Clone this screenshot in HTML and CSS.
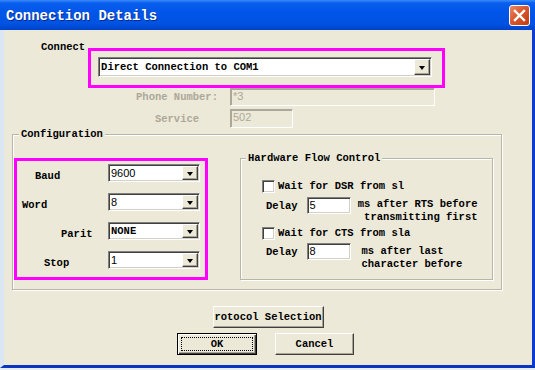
FILE: index.html
```html
<!DOCTYPE html>
<html lang="en">

<head>
    <meta charset="UTF-8">
    <title>Connection Details</title>
    <link rel="stylesheet" href="styles.css">
</head>

<body>

    <div class="window">
        <div class="titlebar">
            <span class="title">Connection Details</span>
            <span class="close">
                <svg width="13" height="13" viewBox="0 0 13 13">
                    <path d="M2 2 L11 11 M11 2 L2 11" stroke="#fff" stroke-width="2.4" stroke-linecap="square" fill="none" />
                </svg>
            </span>
        </div>

        <div class="client">
            <!-- connection type -->
            <div class="connect-row">
                <span class="connect-lbl">Connect</span>
                <div class="mark mark-connect">
                    <div class="combo combo-wide">
                        <span class="combo-text">Direct Connection to COM1</span>
                        <span class="drop"></span>
                    </div>
                </div>
            </div>

            <div class="dial-grid">
                <span class="lbl-off">Phone Number:</span>
                <div class="edit edit-off edit-phone">*3</div>
                <span class="lbl-off">Service</span>
                <div class="edit edit-off edit-service">502</div>
            </div>

            <fieldset class="group config">
                <legend>Configuration</legend>
                <div class="config-body">
                    <div class="mark mark-port">
                        <span class="port-lbl lbl-baud">Baud</span>
                        <div class="combo"><span class="combo-text val-sans">9600</span><span class="drop"></span></div>
                        <span class="port-lbl lbl-word">Word</span>
                        <div class="combo"><span class="combo-text val-sans">8</span><span class="drop"></span></div>
                        <span class="port-lbl lbl-parit">Parit</span>
                        <div class="combo"><span class="combo-text">NONE</span><span class="drop"></span></div>
                        <span class="port-lbl lbl-stop">Stop</span>
                        <div class="combo"><span class="combo-text val-sans">1</span><span class="drop"></span></div>
                    </div>

                    <fieldset class="group flow">
                        <legend>Hardware Flow Control</legend>
                        <div class="flow-body">
                            <div class="check-row"><span class="check"></span>Wait for DSR from sl</div>
                            <div class="delay-row">
                                <span class="delay-lbl">Delay</span>
                                <div class="edit edit-delay">5</div>
                                <span class="note note-rts">ms after RTS before<br>transmitting first</span>
                            </div>
                            <div class="check-row check-second"><span class="check"></span>Wait for CTS from sla</div>
                            <div class="delay-row delay-second">
                                <span class="delay-lbl">Delay</span>
                                <div class="edit edit-delay">8</div>
                                <span class="note note-last">ms after last<br>character before</span>
                            </div>
                        </div>
                    </fieldset>
                </div>
            </fieldset>

            <div class="buttons">
                <div class="btn btn-protocol">rotocol Selection</div>
                <div class="btn-row">
                    <div class="btn btn-default"><span class="focus">OK</span></div>
                    <div class="btn btn-cancel">Cancel</div>
                </div>
            </div>
        </div>
    </div>

</body>

</html>
```

FILE: styles.css
```css
html,
body {
    margin: 0;
    padding: 0;
}

body {
    width: 535px;
    height: 370px;
    overflow: hidden;
    background: #e6edf6;
    font-family: "Liberation Mono", "DejaVu Sans Mono", monospace;
    font-size: 10.5px;
    font-weight: bold;
    color: #000;
}

.window {
    display: flex;
    flex-direction: column;
    height: 368px;
}

/* title bar */
.titlebar {
    flex: none;
    height: 30px;
    box-sizing: border-box;
    display: flex;
    align-items: center;
    justify-content: space-between;
    padding: 1px 5px 0 6px;
    background: linear-gradient(#3a8cf8 0, #0a5eef 3px, #0056e8 40%, #0052e2 80%, #0043c8 100%);
}

.title {
    color: #fff;
    font-size: 14px;
    text-shadow: 1px 1px 0 #0a2a8c;
}

.close {
    width: 21px;
    height: 21px;
    box-sizing: border-box;
    display: flex;
    align-items: center;
    justify-content: center;
    border: 1px solid #fff;
    border-radius: 3px;
    background: linear-gradient(135deg, #e9896a 0, #d9582f 45%, #c3390f 100%);
}

/* dialog body */
.client {
    flex: 1;
    display: flex;
    flex-direction: column;
    background: #ece9d8;
    border-left: 4px solid #dae6f3;
    border-right: 3px solid #0b3bd0;
    border-bottom: 3px solid #0a36c2;
}

.mark {
    box-sizing: border-box;
    border: 3px solid #f0f;
}

.connect-row {
    display: flex;
    align-items: flex-start;
    padding: 11px 0 0 37px;
}

.connect-lbl {
    line-height: 12px;
}

.mark-connect {
    width: 357px;
    height: 40px;
    margin: 7px 0 0 3px;
    padding: 6px 0 0 7px;
}

.combo {
    box-sizing: border-box;
    height: 18px;
    display: flex;
    background: #fff;
    border: 1px solid;
    border-color: #808080 #fff #fff #808080;
    box-shadow: inset 1px 1px 0 #404040, inset -1px -1px 0 #d4d0c8;
    padding: 1px;
}

.combo-wide {
    width: 334px;
    height: 20px;
}

.combo-text {
    flex: 1;
    padding-left: 1px;
    line-height: 14px;
    white-space: nowrap;
    overflow: hidden;
}

.combo-wide .combo-text {
    line-height: 16px;
}

.val-sans {
    font-family: "Liberation Sans", Arial, sans-serif;
    font-weight: normal;
    font-size: 11px;
}

.drop {
    width: 16px;
    box-sizing: border-box;
    display: flex;
    align-items: center;
    justify-content: center;
    background: #ece9d8;
    border: 1px solid;
    border-color: #fff #404040 #404040 #fff;
    box-shadow: inset -1px -1px 0 #a7a494;
}

.drop::after {
    content: "";
    border-left: 3.5px solid transparent;
    border-right: 3.5px solid transparent;
    border-top: 4px solid #000;
    margin-top: 1px;
}

/* disabled phone fields */
.dial-grid {
    display: grid;
    grid-template-columns: 94px auto;
    grid-template-rows: 18px 19px;
    column-gap: 6px;
    row-gap: 3px;
    padding-left: 126px;
    justify-items: start;
}

.lbl-off {
    justify-self: center;
    align-self: center;
    color: #aca899;
}

.edit {
    box-sizing: border-box;
    height: 17px;
    background: #fff;
    border: 1px solid;
    border-color: #808080 #fff #fff #808080;
    box-shadow: inset 1px 1px 0 #404040, inset -1px -1px 0 #d4d0c8;
    padding: 0 2px;
    font-family: "Liberation Sans", Arial, sans-serif;
    font-weight: normal;
    font-size: 11px;
    line-height: 15px;
}

.edit-off {
    height: 100%;
    background: #ece9d8;
    color: #aca899;
    box-shadow: inset 1px 1px 0 #aca899;
    border-color: #aca899 #fff #fff #aca899;
}

.edit-phone {
    width: 205px;
}

.edit-service {
    width: 63px;
}

/* group boxes */
.group {
    margin: 0;
    padding: 0;
    min-width: 0;
    box-sizing: border-box;
    border: 1px solid #b9b6a7;
    box-shadow: inset 1px 1px 0 #fff, 1px 1px 0 #fff;
}

.group legend {
    margin-left: 5px;
    padding: 0 2px;
    line-height: 12px;
    background: #ece9d8;
}

.config {
    width: 490px;
    margin-left: 8px;
    padding: 12px 0 9px 1px;
}

.config-body {
    display: flex;
    align-items: flex-start;
}

.mark-port {
    width: 194px;
    height: 122px;
    margin-top: 6px;
    padding-top: 3px;
    display: grid;
    grid-template-columns: 91px 92px;
    grid-auto-rows: 18px;
    row-gap: 11px;
}

.port-lbl {
    align-self: center;
    padding-top: 5px;
}

.lbl-baud {
    padding-left: 18px;
}

.lbl-word {
    padding-left: 5px;
}

.lbl-parit {
    padding-left: 44px;
}

.lbl-stop {
    padding-left: 27px;
}

.flow {
    width: 253px;
    height: 128px;
    margin-left: 32px;
}

.flow-body {
    padding: 16px 0 0 21px;
}

.check-row {
    display: flex;
    align-items: center;
    gap: 3px;
    height: 13px;
    line-height: 13px;
}

.check-second {
    margin-top: 4px;
}

.check {
    width: 13px;
    height: 13px;
    box-sizing: border-box;
    background: #fff;
    border: 1px solid;
    border-color: #808080 #fff #fff #808080;
    box-shadow: inset 1px 1px 0 #404040, inset -1px -1px 0 #d4d0c8;
}

.delay-row {
    display: flex;
    align-items: flex-start;
    margin-top: 4px;
    padding-left: 4px;
}

.delay-second {
    margin-top: 3px;
}

.delay-lbl {
    line-height: 17px;
    padding-top: 1px;
}

.edit-delay {
    width: 44px;
    margin-left: 9px;
}

.note {
    white-space: nowrap;
}

.note-rts {
    width: 120px;
    margin-left: 7px;
    padding-top: 1px;
    line-height: 12.5px;
    text-align: right;
}

.note-last {
    margin-left: 11px;
    padding-top: 2px;
    line-height: 13px;
}

/* buttons */
.buttons {
    display: flex;
    flex-direction: column;
    align-items: center;
    gap: 5px;
    margin-top: 16px;
}

.btn-row {
    display: flex;
    gap: 18px;
    padding-right: 5px;
}

.btn {
    box-sizing: border-box;
    height: 22px;
    display: flex;
    align-items: center;
    justify-content: center;
    background: #ece9d8;
    border: 1px solid;
    border-color: #fff #404040 #404040 #fff;
    box-shadow: inset -1px -1px 0 #a7a494;
}

.btn-protocol {
    width: 111px;
}

.btn-default {
    width: 80px;
    border: 1px solid #000;
    box-shadow: inset 1px 1px 0 #fff, inset -1px -1px 0 #404040, inset -2px -2px 0 #a7a494;
    padding: 3px;
}

.focus {
    flex: 1;
    align-self: stretch;
    display: flex;
    align-items: center;
    justify-content: center;
    border: 1px dotted #000;
}

.btn-cancel {
    width: 79px;
}
```
